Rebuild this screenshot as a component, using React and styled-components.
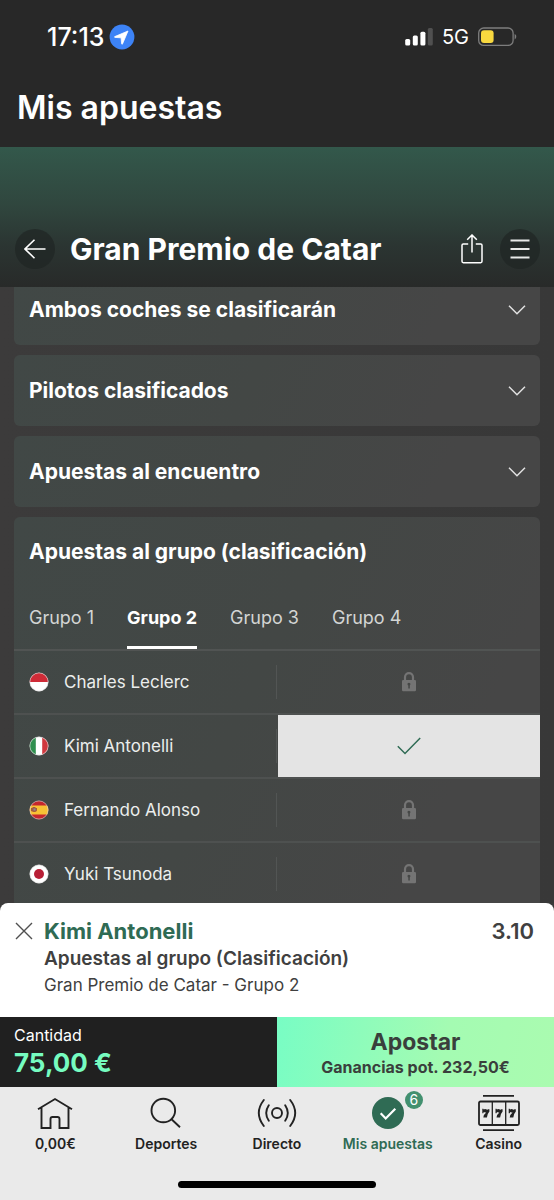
import React, { useState } from "react";
import styled, { createGlobalStyle, css } from "styled-components";

const Global = createGlobalStyle`
  *, *::before, *::after { box-sizing: border-box; }
  body {
    margin: 0;
    background: #3a3a3a;
    font-family: Inter, "Liberation Sans", sans-serif;
    -webkit-font-smoothing: antialiased;
  }
  button, input { font-family: inherit; }
  button { border: 0; padding: 0; background: none; color: inherit; cursor: pointer; }
  h1, h2, h3, p { margin: 0; }
  svg { display: block; flex: none; }
`;

const Screen = styled.div`
  display: flex;
  flex-direction: column;
  height: 100vh;
  overflow: hidden;
  background: #3a3a3a;
`;

const TopBar = styled.header`
  flex: none;
  padding: 20px 17px 19px;
  background: #282828;
  color: #fff;
`;

const StatusBar = styled.div`
  display: flex;
  align-items: center;
  justify-content: space-between;
  height: 34px;
  padding: 0 20px 0 30px;
`;

const StatusGroup = styled.div`
  display: flex;
  align-items: center;
  gap: ${(p) => p.$gap}px;
`;

const Clock = styled.span`
  font-size: 25px;
  line-height: 34px;
  font-weight: 500;
`;

const Network = styled.span`
  font-size: 20px;
  line-height: 34px;
`;

const PageTitle = styled.h1`
  margin-top: 34px;
  font-size: 32px;
  line-height: 40px;
  font-weight: 600;
`;

const Hero = styled.div`
  flex: none;
  display: flex;
  align-items: center;
  height: 140px;
  padding: 64px 14px 0 15px;
  background: linear-gradient(#33584b 0%, #30463e 42%, #2b3532 70%, #282a29 100%);
  color: #fff;
`;

const EventTitle = styled.h2`
  flex: 1;
  margin-left: 15px;
  font-size: 30px;
  line-height: 40px;
  font-weight: 700;
  white-space: nowrap;
`;

const IconButton = styled.button`
  display: grid;
  place-items: center;
  width: 40px;
  height: 40px;
  border-radius: 50%;
  background: ${(p) => (p.$plain ? "transparent" : "rgba(32, 37, 35, 0.7)")};
`;

const HeroActions = styled.div`
  display: flex;
  gap: 8px;
`;

const Markets = styled.main`
  flex: 1;
  min-height: 0;
  overflow: hidden;
  padding: 0 14px;
  background: linear-gradient(90deg, #3c3b3b, #383838);
`;

const MarketList = styled.div`
  display: flex;
  flex-direction: column;
  gap: 10px;
  margin-top: -13px;
`;

const cardSurface = css`
  border-radius: 6px;
  background: linear-gradient(115deg, #414846 0%, #434745 45%, #464646 80%);
  color: #fff;
`;

const ClosedMarket = styled.button`
  ${cardSurface}
  display: flex;
  align-items: center;
  justify-content: space-between;
  height: 71px;
  padding: 0 14px 0 15px;
  font-size: 21px;
  line-height: 28px;
  font-weight: 700;
  text-align: left;
`;

const OpenMarket = styled.section`
  ${cardSurface}
`;

const MarketTitle = styled.h3`
  padding: 21px 15px;
  font-size: 21px;
  line-height: 28px;
  font-weight: 700;
`;

const Tabs = styled.div`
  display: flex;
  gap: 33px;
  padding: 0 15px;
  border-bottom: 2px solid #515453;
`;

const Tab = styled.button`
  height: 62px;
  padding-top: 2px;
  font-size: 18px;
  line-height: 24px;
  font-weight: ${(p) => (p.$active ? 700 : 400)};
  color: ${(p) => (p.$active ? "#fff" : "#d3d5d4")};
  border-bottom: 3px solid ${(p) => (p.$active ? "#fff" : "transparent")};
`;

const DriverRow = styled.div`
  display: grid;
  grid-template-columns: 1fr 1fr;
  height: 64px;
  border-bottom: 2px solid #4e5150;
`;

const Driver = styled.div`
  display: flex;
  align-items: center;
  gap: 15px;
  padding-left: 15px;
  font-size: 17px;
  line-height: 24px;
  color: #eceeed;

  &::after {
    content: "";
    width: 1px;
    height: 34px;
    margin-left: auto;
    background: #525554;
  }
`;

const Selection = styled.button`
  display: grid;
  place-items: center;
  margin-left: 1px;
  background: ${(p) => (p.$picked ? "#e4e4e4" : "transparent")};
`;

const Slip = styled.section`
  flex: none;
  display: flex;
  height: 114px;
  padding: 14px 20px 0 15px;
  border-radius: 8px 8px 0 0;
  background: #fff;
  color: #404040;
`;

const RemoveButton = styled.button`
  display: grid;
  place-items: center;
  width: 18px;
  height: 28px;
  margin-right: 11px;
`;

const SlipText = styled.div`
  flex: 1;
`;

const SlipPick = styled.p`
  font-size: 22px;
  line-height: 28px;
  font-weight: 700;
  color: #2f6b54;
`;

const SlipMarket = styled.p`
  font-size: 19px;
  line-height: 28px;
  font-weight: 600;
`;

const SlipEvent = styled.p`
  font-size: 17px;
  line-height: 24px;
`;

const Odds = styled.span`
  font-size: 22px;
  line-height: 28px;
  font-weight: 600;
`;

const StakeBar = styled.form`
  flex: none;
  display: grid;
  grid-template-columns: 1fr 1fr;
  height: 70px;
`;

const Stake = styled.label`
  display: flex;
  flex-direction: column;
  padding: 8px 14px 0;
  background: #202020;
  color: #fff;
  font-size: 16px;
  line-height: 20px;
`;

const StakeInput = styled.input`
  width: 100%;
  padding: 0;
  border: 0;
  outline: 0;
  background: none;
  color: #76fcc0;
  font-size: 26px;
  line-height: 36px;
  height: 36px;
  font-weight: 700;
`;

const PlaceBet = styled.button`
  display: flex;
  flex-direction: column;
  align-items: center;
  justify-content: center;
  padding-top: 2px;
  background: linear-gradient(100deg, #78fdc4 0%, #a4fbb2 60%, #aafbb0 100%);
  color: #3a3f3c;
`;

const PlaceBetLabel = styled.span`
  font-size: 23px;
  line-height: 28px;
  font-weight: 700;
`;

const PlaceBetReturn = styled.span`
  font-size: 16px;
  line-height: 22px;
  font-weight: 700;
`;

const BottomArea = styled.footer`
  flex: none;
  display: flex;
  flex-direction: column;
  height: 113px;
  padding-bottom: 12px;
  background: #eaeaea;
`;

const Nav = styled.nav`
  display: grid;
  grid-template-columns: repeat(5, 1fr);
  padding-top: 8px;
`;

const NavLink = styled.a`
  display: flex;
  flex-direction: column;
  align-items: center;
  gap: 3px;
  color: ${(p) => (p.$active ? "#2f6b54" : "#222")};
  font-size: 14px;
  line-height: 20px;
  font-weight: 600;
  text-decoration: none;
`;

const NavIcon = styled.span`
  position: relative;
  display: grid;
  place-items: center;
  height: 36px;
`;

const Count = styled.span`
  position: absolute;
  top: -4px;
  right: -19px;
  width: 18px;
  height: 18px;
  border-radius: 50%;
  background: #42906f;
  color: #fff;
  font-size: 14px;
  line-height: 18px;
  font-weight: 400;
  text-align: center;
`;

const HomeIndicator = styled.div`
  width: 198px;
  height: 7px;
  margin: auto auto 0;
  border-radius: 4px;
  background: #000;
`;

const LocationIcon = () => (
  <svg width="26" height="26" viewBox="0 0 26 26" aria-hidden="true">
    <circle cx="13" cy="13" r="12.4" fill="#3d83f6" />
    <path d="M19 7 5.800 12.600q-.8.5.1.8l6.200.4.5 6q.3 1 .9.1Z" fill="#fff" stroke="#fff" strokeWidth=".8" strokeLinejoin="round" />
  </svg>
);

const SignalIcon = () => (
  <svg width="28" height="18" viewBox="0 0 28 18" aria-hidden="true">
    <rect x="0.2" y="11" width="5" height="6.6" rx="1.5" fill="#fff" />
    <rect x="7.8" y="7.6" width="5" height="10" rx="1.5" fill="#fff" />
    <rect x="15.4" y="3.8" width="5" height="13.8" rx="1.5" fill="#fff" />
    <rect x="22.8" y="0" width="5" height="17.6" rx="1.5" fill="#505050" />
  </svg>
);

const BatteryIcon = () => (
  <svg width="39" height="20" viewBox="0 0 39 20" aria-hidden="true">
    <rect x="0.7" y="1" width="34.4" height="17.4" rx="5" fill="none" stroke="#7d7d7d" strokeWidth="1.3" />
    <path d="M36.6 7v5.4c2-.7 2.4-4.600 0-5.400Z" fill="#7d7d7d" />
    <rect x="3" y="3.300" width="12.600" height="12.800" rx="3" fill="#f8d83f" />
  </svg>
);

const BackIcon = () => (
  <svg width="22" height="20" viewBox="0 0 22 20" fill="none" stroke="#fff" strokeWidth="1.6" aria-hidden="true">
    <path d="M21.500 10H1M10.500 .8 1 10l9.500 9.200" />
  </svg>
);

const ShareIcon = () => (
  <svg width="22" height="30" viewBox="0 0 22 30" fill="none" stroke="#fff" strokeWidth="1.500" aria-hidden="true">
    <path d="M7.200 10H2.300q-1.300 0-1.300 1.300v16q0 1.400 1.300 1.400h17.400q1.300 0 1.300-1.400v-16q0-1.300-1.300-1.300h-4.900M11 18.500V1M6.200 5.800 11 1l4.800 4.800" />
  </svg>
);

const MenuIcon = () => (
  <svg width="20" height="20" viewBox="0 0 20 20" fill="none" stroke="#e8eae9" strokeWidth="2" aria-hidden="true">
    <path d="M.5 1.500h19M.5 10h19M.5 18.500h19" />
  </svg>
);

const ChevronIcon = () => (
  <svg width="18" height="10" viewBox="0 0 18 10" fill="none" stroke="#e2e2e2" strokeWidth="1.500" aria-hidden="true">
    <path d="m1 .8 8 8 8-8" />
  </svg>
);

const LockIcon = () => (
  <svg width="16" height="20" viewBox="0 0 16 20" aria-hidden="true">
    <path d="M4 8.500V5.200a4 4 0 0 1 8 0v3.300" fill="none" stroke="#747474" strokeWidth="2.200" />
    <path d="M2.200 8h11.600q1.200 0 1.200 1.200v8.800q0 1.200-1.200 1.200H2.200Q1 19.200 1 18V9.200Q1 8 2.200 8Z" fill="#747474" />
    <path d="M6.600 11.200q1.400-1 2.600 0 .6 1.200-.4 2.200v3H7.300v-3q-.3-.3-.7-.3Z" fill="#454746" />
  </svg>
);

const PickedIcon = () => (
  <svg width="24" height="18" viewBox="0 0 24 18" fill="none" stroke="#2f6b54" strokeWidth="1.500" aria-hidden="true">
    <path d="m.8 9.300 7.200 7.200L23.200 1" />
  </svg>
);

const RemoveIcon = () => (
  <svg width="18" height="18" viewBox="0 0 18 18" fill="none" stroke="#505050" strokeWidth="1.400" aria-hidden="true">
    <path d="m1 1 16 16M17 1 1 17" />
  </svg>
);

const FlagDisc = ({ id, children }) => (
  <svg width="20" height="20" viewBox="0 0 20 20" aria-hidden="true">
    <clipPath id={id}>
      <circle cx="10" cy="10" r="9.300" />
    </clipPath>
    <g clipPath={`url(#${id})`}>{children}</g>
    <circle cx="10" cy="10" r="9.100" fill="none" stroke="#dcdcdc" strokeOpacity=".75" strokeWidth=".8" />
  </svg>
);

const flags = {
  monaco: (
    <FlagDisc id="flag-mc">
      <path fill="#fff" d="M0 0h20v20H0z" />
      <path fill="#cf2b37" d="M0 0h20v10H0z" />
    </FlagDisc>
  ),
  italy: (
    <FlagDisc id="flag-it">
      <path fill="#fff" d="M0 0h20v20H0z" />
      <path fill="#2f8f4e" d="M0 0h6.800v20H0z" />
      <path fill="#d0383e" d="M13.200 0H20v20h-6.800z" />
    </FlagDisc>
  ),
  spain: (
    <FlagDisc id="flag-es">
      <path fill="#c5272d" d="M0 0h20v20H0z" />
      <path fill="#f7c135" d="M0 5.500h20v9H0z" />
      <path fill="#a65a3c" d="M2 8h1.500V7h3v1H8v2.500q-1 2-3.500 1.500L2 11Z" />
      <path fill="#8b8d98" d="M4.500 8.500h2v2h-2z" />
    </FlagDisc>
  ),
  japan: (
    <FlagDisc id="flag-jp">
      <path fill="#fff" d="M0 0h20v20H0z" />
      <circle cx="10" cy="10" r="5" fill="#b81f36" />
    </FlagDisc>
  ),
};

const HomeIcon = () => (
  <svg width="36" height="34" viewBox="0 0 36 34" fill="none" stroke="#222" strokeWidth="1.900" aria-hidden="true">
    <path d="M1 13.200 18 3l17 10.200M4.500 11.500V32h9V23q0-2 2-2h5q2 0 2 2v9h9V11.500" />
  </svg>
);

const SearchIcon = () => (
  <svg width="32" height="34" viewBox="0 0 32 34" fill="none" stroke="#222" strokeWidth="1.900" aria-hidden="true">
    <circle cx="13.300" cy="14.500" r="11.800" />
    <path d="m21.500 23.200 8.500 8" />
  </svg>
);

const LiveIcon = () => (
  <svg width="40" height="34" viewBox="0 0 40 34" fill="none" stroke="#222" strokeWidth="1.900" strokeLinecap="round" aria-hidden="true">
    <circle cx="20" cy="17" r="5" />
    <path d="M11.800 9.200q-5.200 7.800 0 15.600M28.200 9.200q5.200 7.800 0 15.600M6.800 4q-10 13 0 26M33.200 4q10 13 0 26" />
  </svg>
);

const BetsIcon = () => (
  <svg width="32" height="34" viewBox="0 0 32 34" aria-hidden="true">
    <circle cx="16" cy="17" r="16" fill="#2f6b54" />
    <path d="m8.700 17.300 5 5.200 9.600-9.700" fill="none" stroke="#fff" strokeWidth="2.200" />
  </svg>
);

const CasinoIcon = () => (
  <svg width="42" height="36" viewBox="0 0 42 36" fill="none" stroke="#222" strokeWidth="1.800" aria-hidden="true">
    <rect x="1" y="6.500" width="40" height="23.500" rx="1.500" />
    <path d="M5 .9h31M5 35.100h31" />
    <path d="M14.300 6.500v23.500M27.700 6.500v23.500" strokeWidth="1.300" />
    <g fill="#222" stroke="none">
      {[0, 13.2, 26.4].map((x) => (
        <path key={x} transform={`translate(${x} 0)`} d="M4.300 13.800h1l.4.700q1.400-1.200 3 0 .8.500 1.400-.2h1.300v2.300q-2.300 2.600-2.500 5.800H5.300q.2-3 2.900-5-1.600.2-2.400-.3l-.5 1.200h-1Z" />
      ))}
    </g>
  </svg>
);

const closedMarkets = ["Ambos coches se clasificarán", "Pilotos clasificados", "Apuestas al encuentro"];
const groups = ["Grupo 1", "Grupo 2", "Grupo 3", "Grupo 4"];
const drivers = [
  { name: "Charles Leclerc", flag: "monaco" },
  { name: "Kimi Antonelli", flag: "italy", picked: true },
  { name: "Fernando Alonso", flag: "spain" },
  { name: "Yuki Tsunoda", flag: "japan" },
];
const navItems = [
  { label: "0,00€", Icon: HomeIcon },
  { label: "Deportes", Icon: SearchIcon },
  { label: "Directo", Icon: LiveIcon },
  { label: "Mis apuestas", Icon: BetsIcon, active: true, count: 6 },
  { label: "Casino", Icon: CasinoIcon },
];

export default function App() {
  const [group, setGroup] = useState("Grupo 2");
  const [stake, setStake] = useState("75,00 €");

  return (
    <Screen>
      <Global />
      <TopBar>
        <StatusBar>
          <StatusGroup $gap={5}>
            <Clock>17:13</Clock>
            <LocationIcon />
          </StatusGroup>
          <StatusGroup $gap={9}>
            <SignalIcon />
            <Network>5G</Network>
            <BatteryIcon />
          </StatusGroup>
        </StatusBar>
        <PageTitle>Mis apuestas</PageTitle>
      </TopBar>

      <Hero>
        <IconButton aria-label="Volver">
          <BackIcon />
        </IconButton>
        <EventTitle>Gran Premio de Catar</EventTitle>
        <HeroActions>
          <IconButton $plain aria-label="Compartir">
            <ShareIcon />
          </IconButton>
          <IconButton aria-label="Menú">
            <MenuIcon />
          </IconButton>
        </HeroActions>
      </Hero>

      <Markets>
        <MarketList>
          {closedMarkets.map((name) => (
            <ClosedMarket key={name} aria-expanded="false">
              {name}
              <ChevronIcon />
            </ClosedMarket>
          ))}
          <OpenMarket>
            <MarketTitle>Apuestas al grupo (clasificación)</MarketTitle>
            <Tabs role="tablist">
              {groups.map((name) => (
                <Tab
                  key={name}
                  role="tab"
                  aria-selected={group === name}
                  $active={group === name}
                  onClick={() => setGroup(name)}
                >
                  {name}
                </Tab>
              ))}
            </Tabs>
            {drivers.map(({ name, flag, picked }) => (
              <DriverRow key={name}>
                <Driver>
                  {flags[flag]}
                  {name}
                </Driver>
                <Selection $picked={picked} disabled={!picked} aria-label={name}>
                  {picked ? <PickedIcon /> : <LockIcon />}
                </Selection>
              </DriverRow>
            ))}
          </OpenMarket>
        </MarketList>
      </Markets>

      <Slip>
        <RemoveButton aria-label="Eliminar">
          <RemoveIcon />
        </RemoveButton>
        <SlipText>
          <SlipPick>Kimi Antonelli</SlipPick>
          <SlipMarket>Apuestas al grupo (Clasificación)</SlipMarket>
          <SlipEvent>Gran Premio de Catar - Grupo 2</SlipEvent>
        </SlipText>
        <Odds>3.10</Odds>
      </Slip>

      <StakeBar onSubmit={(e) => e.preventDefault()}>
        <Stake>
          Cantidad
          <StakeInput value={stake} onChange={(e) => setStake(e.target.value)} />
        </Stake>
        <PlaceBet type="submit">
          <PlaceBetLabel>Apostar</PlaceBetLabel>
          <PlaceBetReturn>Ganancias pot. 232,50€</PlaceBetReturn>
        </PlaceBet>
      </StakeBar>

      <BottomArea>
        <Nav>
          {navItems.map(({ label, Icon, active, count }) => (
            <NavLink key={label} href="#" $active={active}>
              <NavIcon>
                <Icon />
                {count && <Count>{count}</Count>}
              </NavIcon>
              {label}
            </NavLink>
          ))}
        </Nav>
        <HomeIndicator />
      </BottomArea>
    </Screen>
  );
}
